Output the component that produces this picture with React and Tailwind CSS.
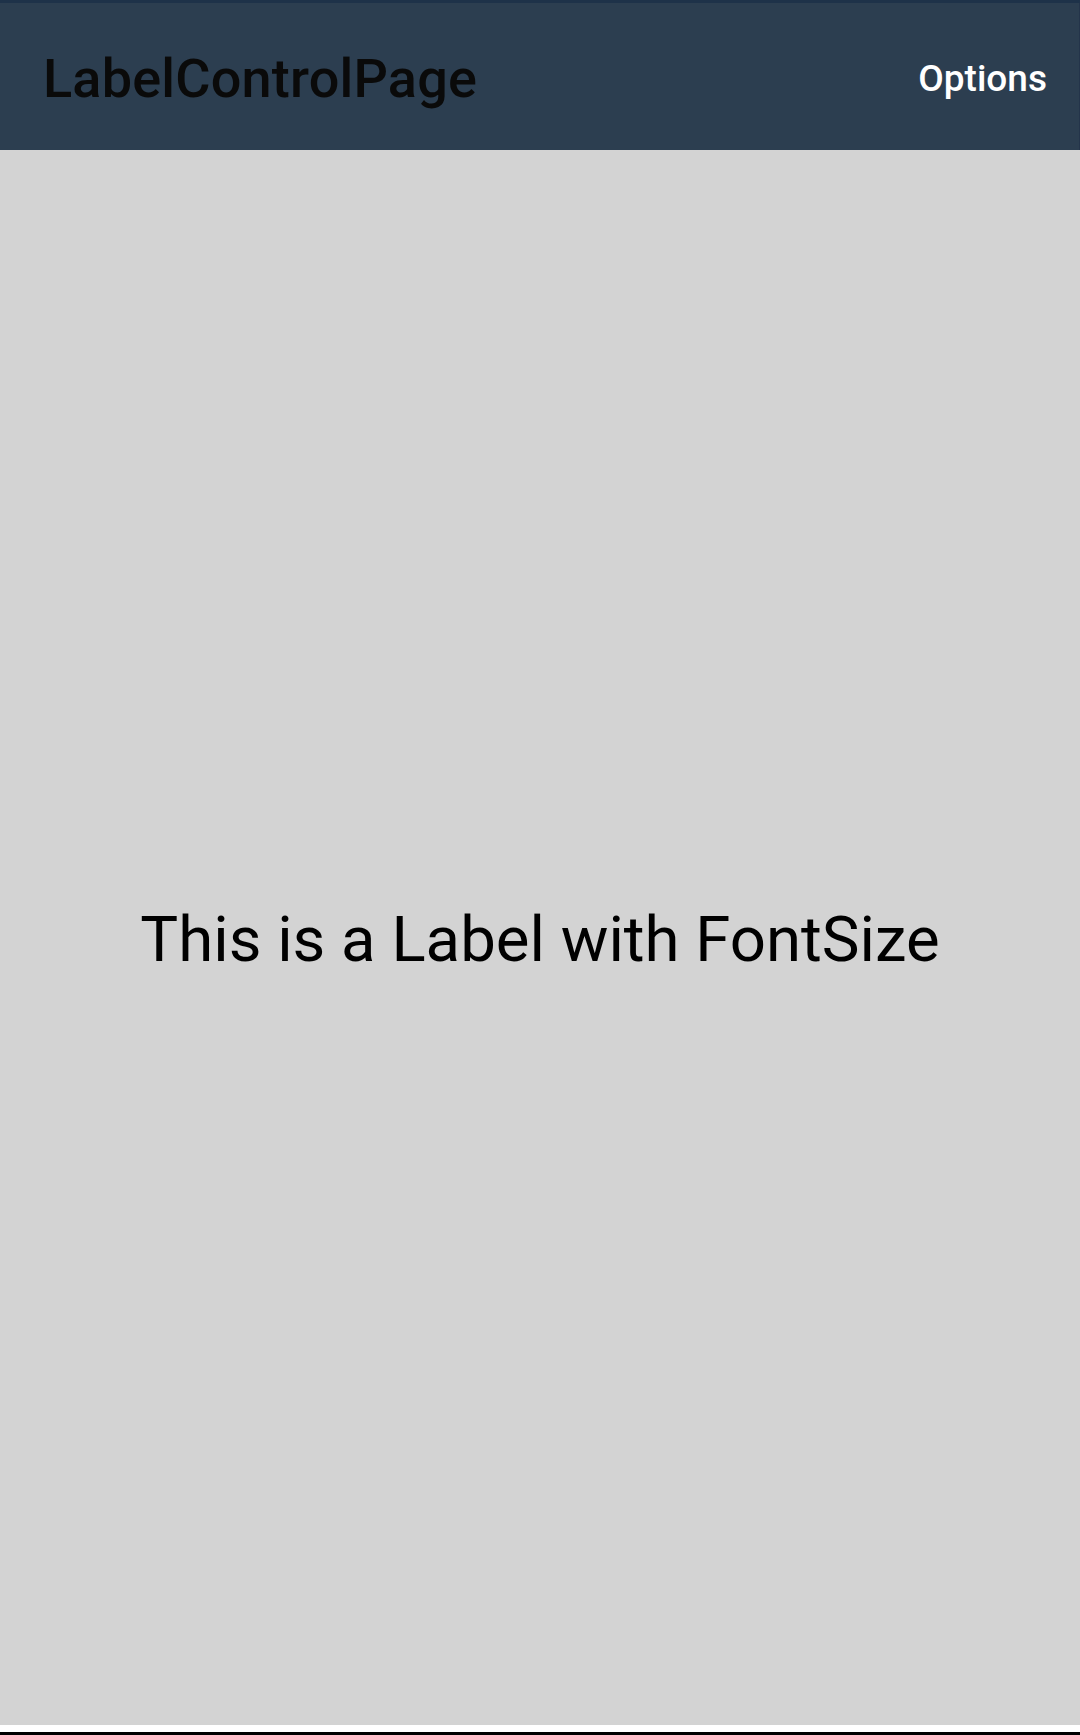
import React from 'react';

const App = () => {
  return (
    <div className="flex flex-col w-[1080px] h-[1735px] bg-white" style={{ fontFamily: 'Roboto, "Noto Sans", sans-serif' }}>
      {/* Status strip */}
      <div className="h-[3px] bg-[#1e3249]" />

      {/* Toolbar */}
      <div className="h-[147px] flex items-center justify-between pl-[43px] pr-[32px] bg-[#2c3e50] border-r border-[#24344a]">
        <h1 className="pt-[4px] text-[54px] font-medium tracking-[0.2px] text-[#0a0a0a] leading-none">LabelControlPage</h1>
        <span className="pt-[4px] text-[37px] font-medium text-white leading-none">Options</span>
      </div>

      {/* Content */}
      <div className="h-[1575px] flex items-center justify-center bg-[#d3d3d3] pt-[4px]">
        <p className="text-[63.5px] text-black leading-none">This is a Label with FontSize</p>
      </div>

      {/* Bottom edge */}
      <div className="h-[7px] bg-white" />
      <div className="h-[3px] bg-black" />
    </div>
  );
};

export default App;
